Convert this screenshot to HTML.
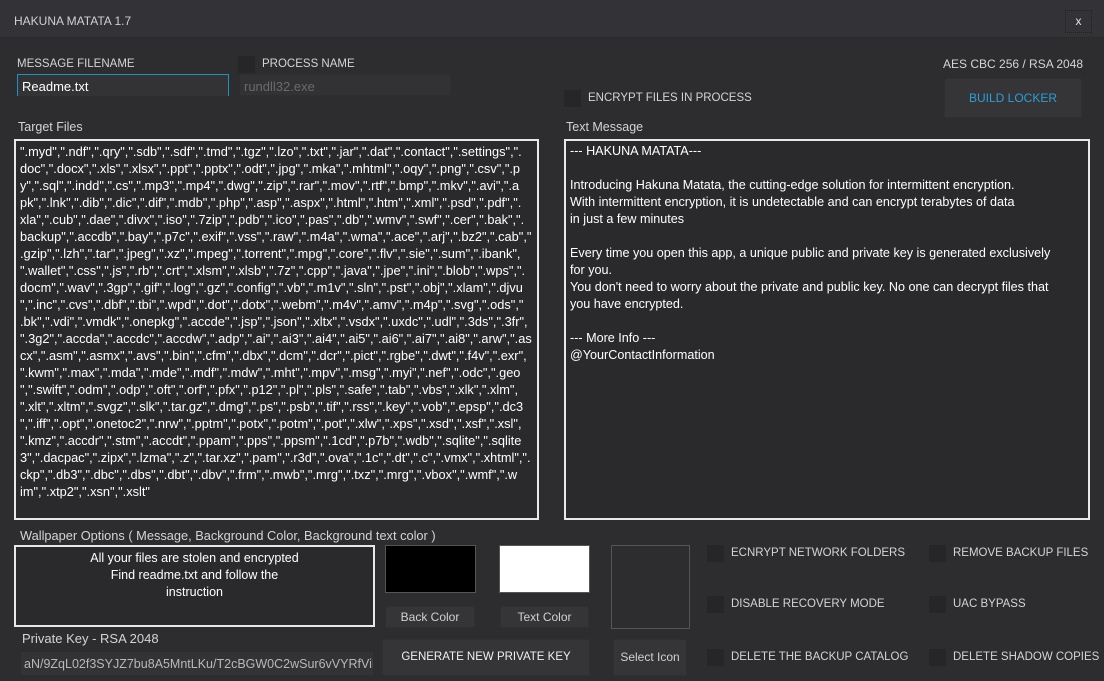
<!DOCTYPE html>
<html><head><meta charset="utf-8"><style>
*{margin:0;padding:0;box-sizing:border-box}
body{width:1104px;height:681px;background:#2d2d30;font-family:"Liberation Sans",sans-serif;color:#d4d4d4;position:relative;overflow:hidden;font-size:12px}
.a{position:absolute;white-space:pre}
.title{left:0;top:0;width:1104px;height:38px;background:#333337;border-bottom:1px solid #2a2a2c}
.box{position:absolute;border:2px solid #e8e8e8;background:#2a2a2d;color:#fff;font-size:12.8px;line-height:17px;padding:2px 4px;white-space:pre;overflow:hidden}
.cb{position:absolute;width:17px;height:17px;background:#262628}
.btn{position:absolute;background:#353538;border:1px dotted #2a2a2a;color:#d0d0d0;text-align:center;font-size:12px}
.lbl{font-size:12.5px;color:#d4d4d4}
.up{font-size:11.5px;color:#d4d4d4}
</style></head><body>
<div class="a title"></div>
<div class="a" style="left:14px;top:14px;font-size:12px;color:#d0d0d0">HAKUNA MATATA 1.7</div>
<div class="a" style="left:1065px;top:10px;width:27px;height:23px;border:1px dotted #1f1f1f;text-align:center;line-height:21px;color:#e0e0e0;font-size:12px">x</div>

<div class="a up" style="left:17px;top:58px">MESSAGE FILENAME</div>
<div class="a" style="left:17px;top:74px;width:212px;height:22px;border:1px solid #1e90c8;border-bottom:none;background:#333336;color:#fff;font-size:13px;padding:4px 4px">Readme.txt</div>
<div class="cb" style="left:238px;top:56px"></div>
<div class="a up" style="left:262px;top:58px">PROCESS NAME</div>
<div class="a" style="left:239px;top:74px;width:212px;height:22px;background:#323235;border:1px dotted #2a2a2a;color:#6a6a6a;font-size:13px;padding:4px 4px">rundll32.exe</div>

<div class="a" style="left:943px;top:57px;font-size:12px">AES CBC 256 / RSA 2048</div>
<div class="btn" style="left:944px;top:78px;width:138px;height:40px;line-height:38px;color:#2a9fd6">BUILD LOCKER</div>
<div class="cb" style="left:564px;top:90px"></div>
<div class="a up" style="left:588px;top:92px">ENCRYPT FILES IN PROCESS</div>

<div class="a lbl" style="left:18px;top:120px">Target Files</div>
<div class="a lbl" style="left:566px;top:120px">Text Message</div>

<div class="box" style="left:14px;top:139px;width:525px;height:381px">".myd",".ndf",".qry",".sdb",".sdf",".tmd",".tgz",".lzo",".txt",".jar",".dat",".contact",".settings",".
doc",".docx",".xls",".xlsx",".ppt",".pptx",".odt",".jpg",".mka",".mhtml",".oqy",".png",".csv",".p
y",".sql",".indd",".cs",".mp3",".mp4",".dwg",".zip",".rar",".mov",".rtf",".bmp",".mkv",".avi",".a
pk",".lnk",".dib",".dic",".dif",".mdb",".php",".asp",".aspx",".html",".htm",".xml",".psd",".pdf",".
xla",".cub",".dae",".divx",".iso",".7zip",".pdb",".ico",".pas",".db",".wmv",".swf",".cer",".bak",".
backup",".accdb",".bay",".p7c",".exif",".vss",".raw",".m4a",".wma",".ace",".arj",".bz2",".cab","
.gzip",".lzh",".tar",".jpeg",".xz",".mpeg",".torrent",".mpg",".core",".flv",".sie",".sum",".ibank",
".wallet",".css",".js",".rb",".crt",".xlsm",".xlsb",".7z",".cpp",".java",".jpe",".ini",".blob",".wps",".
docm",".wav",".3gp",".gif",".log",".gz",".config",".vb",".m1v",".sln",".pst",".obj",".xlam",".djvu
",".inc",".cvs",".dbf",".tbi",".wpd",".dot",".dotx",".webm",".m4v",".amv",".m4p",".svg",".ods","
.bk",".vdi",".vmdk",".onepkg",".accde",".jsp",".json",".xltx",".vsdx",".uxdc",".udl",".3ds",".3fr",
".3g2",".accda",".accdc",".accdw",".adp",".ai",".ai3",".ai4",".ai5",".ai6",".ai7",".ai8",".arw",".as
cx",".asm",".asmx",".avs",".bin",".cfm",".dbx",".dcm",".dcr",".pict",".rgbe",".dwt",".f4v",".exr",
".kwm",".max",".mda",".mde",".mdf",".mdw",".mht",".mpv",".msg",".myi",".nef",".odc",".geo
",".swift",".odm",".odp",".oft",".orf",".pfx",".p12",".pl",".pls",".safe",".tab",".vbs",".xlk",".xlm",
".xlt",".xltm",".svgz",".slk",".tar.gz",".dmg",".ps",".psb",".tif",".rss",".key",".vob",".epsp",".dc3
",".iff",".opt",".onetoc2",".nrw",".pptm",".potx",".potm",".pot",".xlw",".xps",".xsd",".xsf",".xsl",
".kmz",".accdr",".stm",".accdt",".ppam",".pps",".ppsm",".1cd",".p7b",".wdb",".sqlite",".sqlite
3",".dacpac",".zipx",".lzma",".z",".tar.xz",".pam",".r3d",".ova",".1c",".dt",".c",".vmx",".xhtml",".
ckp",".db3",".dbc",".dbs",".dbt",".dbv",".frm",".mwb",".mrg",".txz",".mrg",".vbox",".wmf",".w
im",".xtp2",".xsn",".xslt"</div>

<div class="box" style="left:564px;top:139px;width:526px;height:381px;font-size:12.6px">--- HAKUNA MATATA---

Introducing Hakuna Matata, the cutting-edge solution for intermittent encryption.
With intermittent encryption, it is undetectable and can encrypt terabytes of data
in just a few minutes

Every time you open this app, a unique public and private key is generated exclusively
for you.
You don't need to worry about the private and public key. No one can decrypt files that
you have encrypted.

--- More Info ---
@YourContactInformation</div>

<div class="a" style="left:20px;top:528px;font-size:12.8px">Wallpaper Options ( Message, Background Color, Background text color )</div>
<div class="box" style="left:14px;top:545px;width:361px;height:82px;text-align:center;line-height:17px;padding-top:3px;font-size:12.5px">All your files are stolen and encrypted
Find readme.txt and follow the
instruction</div>
<div class="a" style="left:385px;top:545px;width:91px;height:48px;background:#000;border:1px solid #555"></div>
<div class="a" style="left:499px;top:545px;width:91px;height:48px;background:#fff;border:1px solid #555"></div>
<div class="a" style="left:611px;top:545px;width:79px;height:84px;border:1px solid #555"></div>
<div class="btn" style="left:385px;top:606px;width:90px;height:22px;line-height:20px">Back Color</div>
<div class="btn" style="left:500px;top:606px;width:89px;height:22px;line-height:20px">Text Color</div>

<div class="a" style="left:22px;top:631px;font-size:13px">Private Key - RSA 2048</div>
<div class="a" style="left:20px;top:651px;width:354px;height:25px;background:#333336;border:1px dotted #262626;color:#b8b8b8;font-size:12.5px;padding:5px 3px;overflow:hidden">aN/9ZqL02f3SYJZ7bu8A5MntLKu/T2cBGW0C2wSur6vVYRfViE</div>
<div class="btn" style="left:382px;top:639px;width:208px;height:37px;line-height:35px;color:#f0f0f0;font-size:11.5px">GENERATE NEW PRIVATE KEY</div>
<div class="btn" style="left:613px;top:639px;width:74px;height:37px;line-height:35px">Select Icon</div>

<div class="cb" style="left:707px;top:545px"></div><div class="a up" style="left:731px;top:547px">ECNRYPT NETWORK FOLDERS</div>
<div class="cb" style="left:929px;top:545px"></div><div class="a up" style="left:953px;top:547px">REMOVE BACKUP FILES</div>
<div class="cb" style="left:707px;top:596px"></div><div class="a up" style="left:731px;top:598px">DISABLE RECOVERY MODE</div>
<div class="cb" style="left:929px;top:596px"></div><div class="a up" style="left:953px;top:598px">UAC BYPASS</div>
<div class="cb" style="left:707px;top:649px"></div><div class="a up" style="left:731px;top:651px">DELETE THE BACKUP CATALOG</div>
<div class="cb" style="left:929px;top:649px"></div><div class="a up" style="left:953px;top:651px">DELETE SHADOW COPIES</div>
</body></html>
